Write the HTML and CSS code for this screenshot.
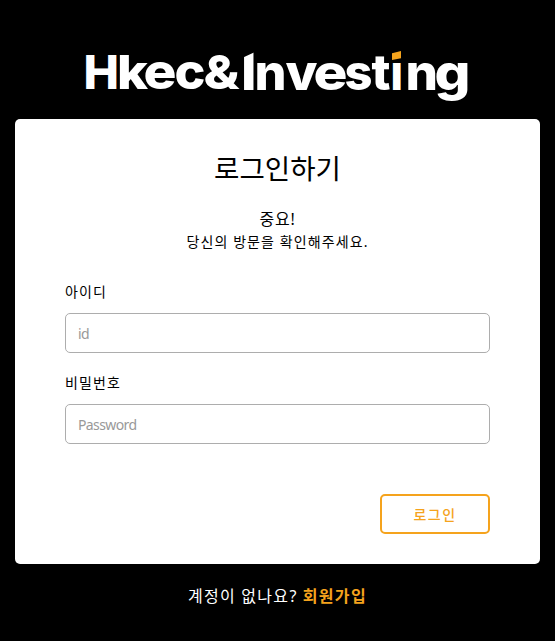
FILE: index.html
```
<!DOCTYPE html>
<html lang="ko">
<head>
<meta charset="utf-8">
<title>로그인하기</title>
<link rel="stylesheet" href="styles.css">
</head>
<body>
<main class="page">
  <svg class="logo" viewBox="0 0 385 53" role="img" aria-label="Hkec&amp;Investing">
    <g class="logo-text">
      <text class="cap" x="-1.5" y="39" textLength="35.5" lengthAdjust="spacingAndGlyphs">H</text>
      <text class="cap" x="32" y="39" textLength="31" lengthAdjust="spacingAndGlyphs">k</text>
      <text x="58.5" y="39.3" textLength="33" lengthAdjust="spacingAndGlyphs">e</text>
      <text x="89.5" y="39.3" textLength="31" lengthAdjust="spacingAndGlyphs">c</text>
      <text class="cap" x="118.5" y="39.3" textLength="36" lengthAdjust="spacingAndGlyphs">&amp;</text>
      <text class="initial" x="156" y="40" textLength="15.5" lengthAdjust="spacingAndGlyphs">I</text>
      <text x="169.5" y="40" textLength="32" lengthAdjust="spacingAndGlyphs">n</text>
      <text x="200.5" y="40" textLength="32" lengthAdjust="spacingAndGlyphs">v</text>
      <text x="228.5" y="39.8" textLength="34" lengthAdjust="spacingAndGlyphs">e</text>
      <text x="259.5" y="39.8" textLength="28" lengthAdjust="spacingAndGlyphs">s</text>
      <text x="286.5" y="40" textLength="19" lengthAdjust="spacingAndGlyphs">t</text>
      <text x="305.5" y="40" textLength="12.5" lengthAdjust="spacingAndGlyphs">i</text>
      <text x="320.5" y="40" textLength="32.5" lengthAdjust="spacingAndGlyphs">n</text>
      <text x="349.5" y="40" textLength="36" lengthAdjust="spacingAndGlyphs">g</text>
    </g>
    <path class="logo-cut" d="M305.5 -2h13v14h-13zM157 -1h13v3l-13 6z"/>
    <path class="logo-dot" d="M307 3.2L316 1v7.2L307 10z"/>
  </svg>
  <form class="card">
    <h1 class="title">로그인하기</h1>
    <p class="notice">중요!</p>
    <p class="message">당신의 방문을 확인해주세요.</p>
    <label class="label" for="id">아이디</label>
    <input class="input" id="id" type="text" placeholder="id">
    <label class="label" for="password">비밀번호</label>
    <input class="input" id="password" type="password" placeholder="Password">
    <button class="submit" type="button">로그인</button>
  </form>
  <p class="signup">계정이 없나요? <a class="signup-link" href="#">회원가입</a></p>
</main>
</body>
</html>
```

FILE: styles.css
```
* { box-sizing: border-box; }
body {
  margin: 0;
  background: #000;
  color: #000;
  font-family: "Noto Sans", "Noto Sans CJK KR", sans-serif;
}
h1, p { margin: 0; font-weight: 400; }
.page {
  height: 641px;
  padding: 50px 15px 0;
  display: flex;
  flex-direction: column;
}
.logo { width: 385px; height: 53px; margin-left: 70px; overflow: visible; }
.logo-text { font: 800 50px Inter, sans-serif; fill: #fff; }
.cap { font-size: 47px; }
.initial { font-size: 53px; }
.logo-cut { fill: #000; }
.logo-dot { fill: #f5a31d; }
.card {
  height: 445px;
  margin-top: 16px;
  padding: 30px 50px;
  background: #fff;
  border-radius: 5px;
  display: flex;
  flex-direction: column;
}
.title { height: 40px; font-size: 27.6px; line-height: 39px; text-align: center; }
.notice { margin-top: 19px; font-size: 16px; line-height: 23px; text-align: center; letter-spacing: 0.7px; }
.message { font-size: 14px; line-height: 22px; text-align: center; letter-spacing: 1.1px; }
.label { margin-top: 29px; font-size: 14px; line-height: 20px; letter-spacing: 1.1px; }
.input {
  width: 100%;
  height: 40px;
  margin-top: 11px;
  padding: 1px 12px 0;
  border: 1px solid #adadad;
  border-radius: 5px;
  font: 14px "Noto Sans", sans-serif;
  letter-spacing: -0.6px;
  outline: 0;
}
.input + .label { margin-top: 20px; }
.input::placeholder { color: #999; opacity: 1; }
.submit {
  width: 110px;
  height: 40px;
  margin-top: 50px;
  padding: 0;
  align-self: flex-end;
  border: 2px solid #f5a31d;
  border-radius: 5px;
  background: #fff;
  color: #f5a31d;
  font: 500 14px "Noto Sans CJK KR", sans-serif;
  letter-spacing: 1.5px;
}
.signup { margin-top: 20px; color: #fff; font-size: 16px; line-height: 24px; text-align: center; letter-spacing: 1.35px; word-spacing: -0.5px; }
.signup-link { color: #f5a31d; font-weight: 700; text-decoration: none; }
```
